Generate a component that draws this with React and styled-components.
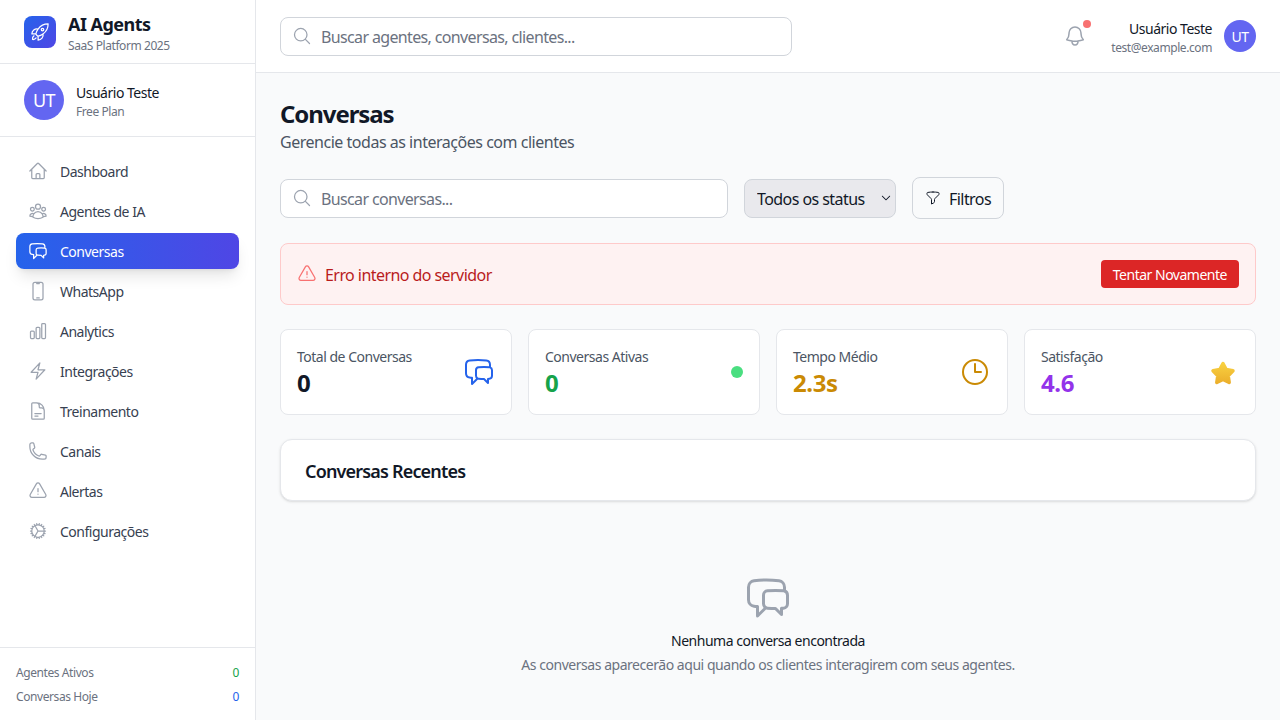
import React from 'react';
import styled, { createGlobalStyle } from 'styled-components';
import {
  HiOutlineHome,
  HiOutlineUserGroup,
  HiOutlineChatBubbleLeftRight,
  HiOutlineDevicePhoneMobile,
  HiOutlineChartBar,
  HiOutlineBolt,
  HiOutlineDocumentText,
  HiOutlinePhone,
  HiOutlineExclamationTriangle,
  HiOutlineCog,
  HiOutlineRocketLaunch,
  HiOutlineMagnifyingGlass,
  HiOutlineBell,
  HiOutlineFunnel,
  HiOutlineClock,
  HiChevronDown,
} from 'react-icons/hi2';

const GlobalStyle = createGlobalStyle`
  * { box-sizing: border-box; letter-spacing: -0.035em; }
  html, body { margin: 0; height: 100%; }
  body {
    font-family: "Noto Sans", "Open Sans", sans-serif;
    background: #f9fafb;
    color: #111827;
    overflow: hidden;
  }
`;

const Layout = styled.div`
  display: flex;
  width: 1280px;
  height: 720px;
`;

const Sidebar = styled.aside`
  width: 256px;
  flex-shrink: 0;
  display: flex;
  flex-direction: column;
  background: #fff;
  border-right: 1px solid #e5e7eb;
`;

const Brand = styled.div`
  height: 64px;
  display: flex;
  align-items: center;
  gap: 12px;
  padding: 0 24px;
  border-bottom: 1px solid #e5e7eb;
`;

const BrandLogo = styled.div`
  width: 32px;
  height: 32px;
  border-radius: 8px;
  display: flex;
  align-items: center;
  justify-content: center;
  color: #fff;
  font-size: 20px;
  background: linear-gradient(135deg, #2563eb, #4f46e5);
`;

const BrandName = styled.div`
  font-size: 18px;
  line-height: 28px;
  font-weight: 700;
  letter-spacing: -0.03em;
  color: #111827;
`;

const BrandSub = styled.div`
  font-size: 12px;
  line-height: 16px;
  color: #6b7280;
`;

const SideUser = styled.div`
  height: 73px;
  display: flex;
  align-items: center;
  gap: 12px;
  padding: 0 24px;
  border-bottom: 1px solid #e5e7eb;
`;

const Avatar = styled.div`
  width: ${(p) => p.$size}px;
  height: ${(p) => p.$size}px;
  border-radius: 50%;
  flex-shrink: 0;
  display: flex;
  align-items: center;
  justify-content: center;
  color: #fff;
  font-size: ${(p) => p.$font}px;
  background: #6366f1;
`;

const UserText = styled.div`
  padding-top: 3px;
  text-align: ${(p) => p.$align || 'left'};
`;

const UserName = styled.div`
  font-size: 14px;
  line-height: 20px;
  color: #111827;
`;

const UserMeta = styled.div`
  margin-top: 1px;
  font-size: 12px;
  line-height: 16px;
  color: #6b7280;
`;

const Nav = styled.nav`
  flex: 1;
  display: flex;
  flex-direction: column;
  gap: 4px;
  padding: 16px;
`;

const NavItem = styled.a`
  height: 36px;
  display: flex;
  align-items: center;
  gap: 12px;
  padding: 0 12px;
  border-radius: 8px;
  font-size: 14px;
  color: ${(p) => (p.$active ? '#fff' : '#374151')};
  background: ${(p) => (p.$active ? 'linear-gradient(90deg, #2563eb, #4f46e5)' : 'transparent')};
  box-shadow: ${(p) => (p.$active ? '0 10px 15px -3px rgba(0,0,0,.1), 0 4px 6px -4px rgba(0,0,0,.1)' : 'none')};

  svg {
    font-size: 20px;
    flex-shrink: 0;
    color: ${(p) => (p.$active ? '#fff' : '#9ca3af')};
  }
`;

const NavLabel = styled.span`
  padding-top: 1px;
`;

const Label = styled.span`
  padding-top: 2px;
`;

const SideFooter = styled.div`
  display: flex;
  flex-direction: column;
  gap: 8px;
  padding: 17px 16px 15px;
  border-top: 1px solid #e5e7eb;
`;

const FooterRow = styled.div`
  display: flex;
  justify-content: space-between;
  font-size: 12px;
  line-height: 16px;
  color: #6b7280;
`;

const FooterValue = styled.span`
  color: ${(p) => p.$color};
`;

const Main = styled.div`
  flex: 1;
  min-width: 0;
  display: flex;
  flex-direction: column;
`;

const Topbar = styled.header`
  height: 73px;
  flex-shrink: 0;
  display: flex;
  align-items: center;
  justify-content: space-between;
  padding: 0 24px;
  background: #fff;
  border-bottom: 1px solid #e5e7eb;
`;

const SearchBox = styled.div`
  position: relative;
  width: ${(p) => p.$width}px;

  svg {
    position: absolute;
    left: 12px;
    top: 50%;
    transform: translateY(-50%);
    font-size: 20px;
    color: #9ca3af;
  }
`;

const SearchInput = styled.input`
  width: 100%;
  height: 39px;
  padding: 2px 16px 0 40px;
  border: 1px solid #d1d5db;
  border-radius: 8px;
  background: #fff;
  font: inherit;
  font-size: 16px;
  letter-spacing: -0.04em;
  color: #111827;
  outline: none;

  &::placeholder {
    color: #6b7280;
    opacity: 1;
  }
`;

const TopRight = styled.div`
  display: flex;
  align-items: center;
  gap: 16px;
`;

const BellButton = styled.div`
  position: relative;
  width: 40px;
  height: 40px;
  display: flex;
  align-items: center;
  justify-content: center;
  color: #9ca3af;
  font-size: 24px;
`;

const BellDot = styled.span`
  position: absolute;
  top: 4px;
  right: 4px;
  width: 8px;
  height: 8px;
  border-radius: 50%;
  background: #f87171;
`;

const TopUser = styled.div`
  display: flex;
  align-items: center;
  gap: 12px;
`;

const Content = styled.main`
  flex: 1;
  padding: 24px;
`;

const PageHead = styled.div`
  padding-top: 1px;
`;

const PageTitle = styled.h1`
  margin: 0;
  font-size: 24px;
  line-height: 32px;
  font-weight: 700;
  letter-spacing: -0.045em;
  color: #111827;
`;

const PageSub = styled.p`
  margin: 0;
  font-size: 16px;
  line-height: 24px;
  letter-spacing: -0.03em;
  color: #4b5563;
`;

const Filters = styled.div`
  display: flex;
  align-items: center;
  gap: 16px;
  margin-top: 23px;
`;

const SelectWrap = styled.div`
  position: relative;
  width: 152px;

  svg {
    position: absolute;
    right: 4px;
    top: 50%;
    transform: translateY(-50%);
    font-size: 12px;
    color: #111827;
    pointer-events: none;
  }
`;

const StatusSelect = styled.select`
  appearance: none;
  width: 100%;
  height: 39px;
  padding: 2px 24px 0 12px;
  border: 1px solid #d1d5db;
  border-radius: 8px;
  background: #e9e9ed;
  font: inherit;
  font-size: 16px;
  color: #111827;
`;

const FilterButton = styled.button`
  height: 42px;
  display: flex;
  align-items: center;
  gap: 8px;
  padding: 0 12px;
  border: 1px solid #d1d5db;
  border-radius: 8px;
  background: transparent;
  font: inherit;
  font-size: 16px;
  letter-spacing: -0.03em;
  color: #111827;

  svg {
    font-size: 16px;
  }
`;

const ErrorBox = styled.div`
  height: 62px;
  margin-top: 24px;
  display: flex;
  align-items: center;
  justify-content: space-between;
  padding: 0 16px;
  background: #fef2f2;
  border: 1px solid #fecaca;
  border-radius: 8px;
`;

const ErrorText = styled.div`
  display: flex;
  align-items: center;
  gap: 8px;
  font-size: 16px;
  color: #b91c1c;

  svg {
    font-size: 20px;
    color: #f87171;
  }
`;

const RetryButton = styled.button`
  height: 28px;
  padding: 0 12px;
  border: 0;
  border-radius: 4px;
  background: #dc2626;
  color: #fff;
  font: inherit;
  font-size: 14px;
`;

const StatsGrid = styled.div`
  display: grid;
  grid-template-columns: repeat(4, 1fr);
  gap: 16px;
  margin-top: 24px;
`;

const StatCard = styled.div`
  height: 86px;
  display: flex;
  align-items: center;
  justify-content: space-between;
  padding: 0 16px;
  background: #fff;
  border: 1px solid #e5e7eb;
  border-radius: 8px;
`;

const StatText = styled.div`
  padding-top: 2px;
`;

const StatLabel = styled.div`
  font-size: 14px;
  line-height: 20px;
  color: #4b5563;
`;

const StatValue = styled.div`
  font-size: 24px;
  line-height: 32px;
  font-weight: 700;
  letter-spacing: -0.015em;
  color: ${(p) => p.$color};
`;

const StatIcon = styled.div`
  display: flex;
  color: ${(p) => p.$color};
  font-size: 32px;
`;

const GreenDot = styled.span`
  width: 12px;
  height: 12px;
  border-radius: 50%;
  background: #4ade80;
`;

const RecentCard = styled.div`
  height: 62px;
  margin-top: 24px;
  display: flex;
  align-items: center;
  padding: 0 24px;
  background: #fff;
  border: 1px solid #e5e7eb;
  border-radius: 12px;
  box-shadow: 0 1px 3px rgba(0, 0, 0, 0.1), 0 1px 2px -1px rgba(0, 0, 0, 0.1);
`;

const RecentTitle = styled.h2`
  margin: 0;
  padding-top: 1px;
  font-size: 18px;
  line-height: 28px;
  font-weight: 600;
  letter-spacing: -0.046em;
  color: #111827;
`;

const Empty = styled.div`
  display: flex;
  flex-direction: column;
  align-items: center;
  padding-top: 73px;
`;

const EmptyIcon = styled.div`
  display: flex;
  font-size: 48px;
  color: #9ca3af;
  margin-bottom: 9px;
`;

const EmptyTitle = styled.div`
  font-size: 14px;
  line-height: 20px;
  color: #111827;
`;

const EmptySub = styled.div`
  margin-top: 4px;
  font-size: 14px;
  line-height: 20px;
  letter-spacing: -0.033em;
  color: #6b7280;
`;

const StarIcon = () => (
  <svg width="32" height="32" viewBox="0 0 32 32">
    <defs>
      <linearGradient id="star" x1="0" y1="0" x2="0" y2="1">
        <stop offset="0" stopColor="#f8d040" />
        <stop offset="1" stopColor="#ecb02c" />
      </linearGradient>
    </defs>
    <path
      d="M16 7.5l3.2 6.05 6.8 1.2-4.8 4.95 1 6.8-6.2-3-6.2 3 1-6.8-4.8-4.95 6.8-1.2z"
      fill="url(#star)"
      stroke="url(#star)"
      strokeWidth="3.5"
      strokeLinejoin="round"
    />
  </svg>
);

const navLinks = [
  { label: 'Dashboard', icon: HiOutlineHome },
  { label: 'Agentes de IA', icon: HiOutlineUserGroup },
  { label: 'Conversas', icon: HiOutlineChatBubbleLeftRight, active: true },
  { label: 'WhatsApp', icon: HiOutlineDevicePhoneMobile },
  { label: 'Analytics', icon: HiOutlineChartBar },
  { label: 'Integrações', icon: HiOutlineBolt },
  { label: 'Treinamento', icon: HiOutlineDocumentText },
  { label: 'Canais', icon: HiOutlinePhone },
  { label: 'Alertas', icon: HiOutlineExclamationTriangle },
  { label: 'Configurações', icon: HiOutlineCog },
];

const App = () => {
  return (
    <Layout>
      <GlobalStyle />
      <Sidebar>
        <Brand>
          <BrandLogo>
            <HiOutlineRocketLaunch />
          </BrandLogo>
          <div>
            <BrandName>AI Agents</BrandName>
            <BrandSub>SaaS Platform 2025</BrandSub>
          </div>
        </Brand>
        <SideUser>
          <Avatar $size={40} $font={18}>UT</Avatar>
          <UserText>
            <UserName>Usuário Teste</UserName>
            <UserMeta>Free Plan</UserMeta>
          </UserText>
        </SideUser>
        <Nav>
          {navLinks.map(({ label, icon: Icon, active }) => (
            <NavItem key={label} $active={active}>
              <Icon />
              <NavLabel>{label}</NavLabel>
            </NavItem>
          ))}
        </Nav>
        <SideFooter>
          <FooterRow>
            <span>Agentes Ativos</span>
            <FooterValue $color="#16a34a">0</FooterValue>
          </FooterRow>
          <FooterRow>
            <span>Conversas Hoje</span>
            <FooterValue $color="#2563eb">0</FooterValue>
          </FooterRow>
        </SideFooter>
      </Sidebar>
      <Main>
        <Topbar>
          <SearchBox $width={512}>
            <HiOutlineMagnifyingGlass />
            <SearchInput placeholder="Buscar agentes, conversas, clientes..." />
          </SearchBox>
          <TopRight>
            <BellButton>
              <HiOutlineBell />
              <BellDot />
            </BellButton>
            <TopUser>
              <UserText $align="right">
                <UserName>Usuário Teste</UserName>
                <UserMeta>test@example.com</UserMeta>
              </UserText>
              <Avatar $size={32} $font={14}>UT</Avatar>
            </TopUser>
          </TopRight>
        </Topbar>
        <Content>
          <PageHead>
            <PageTitle>Conversas</PageTitle>
            <PageSub>Gerencie todas as interações com clientes</PageSub>
          </PageHead>
          <Filters>
            <SearchBox $width={448}>
              <HiOutlineMagnifyingGlass />
              <SearchInput placeholder="Buscar conversas..." />
            </SearchBox>
            <SelectWrap>
              <StatusSelect defaultValue="all">
                <option value="all">Todos os status</option>
              </StatusSelect>
              <HiChevronDown />
            </SelectWrap>
            <FilterButton>
              <HiOutlineFunnel />
              <Label>Filtros</Label>
            </FilterButton>
          </Filters>
          <ErrorBox>
            <ErrorText>
              <HiOutlineExclamationTriangle />
              <Label>Erro interno do servidor</Label>
            </ErrorText>
            <RetryButton>Tentar Novamente</RetryButton>
          </ErrorBox>
          <StatsGrid>
            <StatCard>
              <StatText>
                <StatLabel>Total de Conversas</StatLabel>
                <StatValue $color="#111827">0</StatValue>
              </StatText>
              <StatIcon $color="#2563eb"><HiOutlineChatBubbleLeftRight /></StatIcon>
            </StatCard>
            <StatCard>
              <StatText>
                <StatLabel>Conversas Ativas</StatLabel>
                <StatValue $color="#16a34a">0</StatValue>
              </StatText>
              <GreenDot />
            </StatCard>
            <StatCard>
              <StatText>
                <StatLabel>Tempo Médio</StatLabel>
                <StatValue $color="#ca8a04">2.3s</StatValue>
              </StatText>
              <StatIcon $color="#ca8a04"><HiOutlineClock /></StatIcon>
            </StatCard>
            <StatCard>
              <StatText>
                <StatLabel>Satisfação</StatLabel>
                <StatValue $color="#9333ea">4.6</StatValue>
              </StatText>
              <StarIcon />
            </StatCard>
          </StatsGrid>
          <RecentCard>
            <RecentTitle>Conversas Recentes</RecentTitle>
          </RecentCard>
          <Empty>
            <EmptyIcon><HiOutlineChatBubbleLeftRight /></EmptyIcon>
            <EmptyTitle>Nenhuma conversa encontrada</EmptyTitle>
            <EmptySub>As conversas aparecerão aqui quando os clientes interagirem com seus agentes.</EmptySub>
          </Empty>
        </Content>
      </Main>
    </Layout>
  );
};

export default App;
